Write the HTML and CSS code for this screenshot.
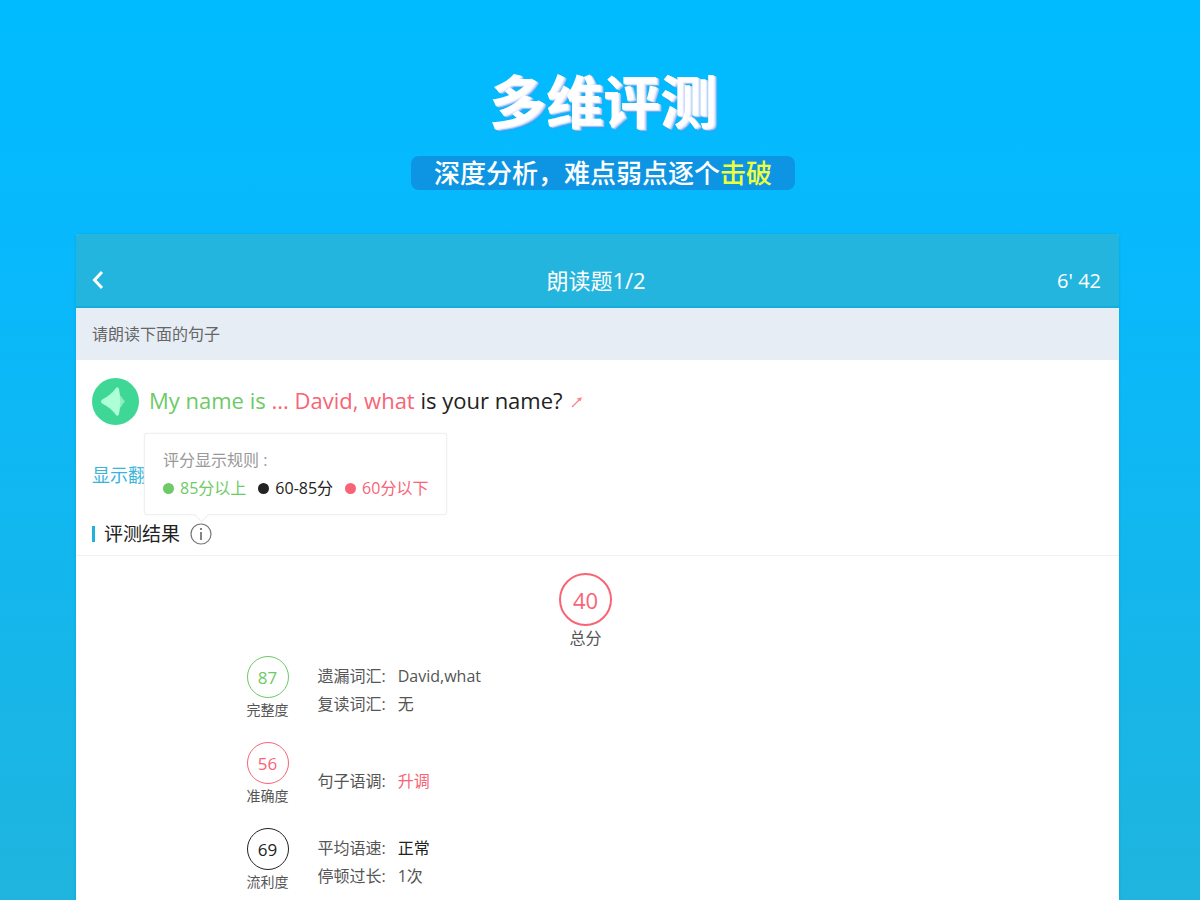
FILE: index.html
```
<!DOCTYPE html>
<html lang="zh-CN">
<head>
    <meta charset="UTF-8">
    <meta name="viewport" content="width=device-width, initial-scale=1.0">
    <title>多维评测</title>
    <link rel="stylesheet" href="styles.css">
</head>
<body>
    <header class="hero">
        <h1>多维评测</h1>
        <p class="slogan">深度分析，难点弱点逐个<strong>击破</strong></p>
    </header>

    <main class="panel">
        <div class="topbar">
            <button class="back" aria-label="返回">
                <svg width="14" height="20" viewBox="0 0 14 20"><path d="M11 2 L3.500 10 L11 18" fill="none" stroke="#fff" stroke-width="3"/></svg>
            </button>
            <h2>朗读题1/2</h2>
            <span class="timer">6' 42</span>
        </div>
        <p class="notice">请朗读下面的句子</p>

        <section class="question">
            <button class="play" aria-label="播放">
                <svg width="47" height="47" viewBox="0 0 47 47">
                    <circle cx="23.500" cy="23.500" r="23.500" fill="#3fd796"/>
                    <path d="M26 17 Q30 18 30 20 L33 23.500 L30 27 Q30 29 26 31 Z" fill="#8ceebc"/>
                    <path d="M9 23.500 Q9 22 11 21 Q19 17 24 10 Q26 8 27 11 Q29.500 23.500 27 36 Q26 39 24 37 Q19 30 11 26 Q9 25 9 23.500 Z" fill="#adffd5"/>
                </svg>
            </button>
            <p class="sentence"><span class="good">My name is</span> <span class="bad">... David, what</span> is your name?</p>
            <svg class="rise" width="11" height="12" viewBox="0 0 11 12"><path d="M1 11 L9 3 M6 3 L10 2 L9 5" fill="none" stroke="#f9808d" stroke-width="1.200"/></svg>
        </section>
        <a class="translate" href="#">显示翻译</a>

        <div class="result-title">
            <h3>评测结果</h3>
            <div class="info">
                <button aria-label="评分显示规则">
                    <svg width="22" height="22" viewBox="0 0 22 22"><circle cx="11" cy="11" r="10" fill="none" stroke="#777" stroke-width="1.200"/><path d="M11 9 V17 M11 5 V7" stroke="#666" stroke-width="1.600"/></svg>
                </button>
                <div class="tooltip">
                    <p>评分显示规则 :</p>
                    <ul>
                        <li class="good">85分以上</li>
                        <li>60-85分</li>
                        <li class="bad">60分以下</li>
                    </ul>
                </div>
            </div>
        </div>

        <section class="scores">
            <div class="score total bad">
                <span class="circle">40</span>
                <span class="label">总分</span>
            </div>
            <div class="row">
                <div class="score good">
                    <span class="circle">87</span>
                    <span class="label">完整度</span>
                </div>
                <dl>
                    <div><dt>遗漏词汇:</dt><dd>David,what</dd></div>
                    <div><dt>复读词汇:</dt><dd>无</dd></div>
                </dl>
            </div>
            <div class="row">
                <div class="score bad">
                    <span class="circle">56</span>
                    <span class="label">准确度</span>
                </div>
                <dl class="single">
                    <div><dt>句子语调:</dt><dd class="bad">升调</dd></div>
                </dl>
            </div>
            <div class="row">
                <div class="score">
                    <span class="circle">69</span>
                    <span class="label">流利度</span>
                </div>
                <dl>
                    <div><dt>平均语速:</dt><dd class="normal">正常</dd></div>
                    <div><dt>停顿过长:</dt><dd>1次</dd></div>
                </dl>
            </div>
        </section>
    </main>
</body>
</html>
```
FILE: styles.css
```
* {
    margin: 0;
    padding: 0;
    box-sizing: border-box;
}

body {
    min-height: 100vh;
    display: flex;
    flex-direction: column;
    background: linear-gradient(#00bbff, #08b9fc 28%, #20b4dc);
    font-family: "Open Sans", "Noto Sans CJK SC", sans-serif;
    font-size: 16px;
    color: #222;
}

button {
    border: none;
    background: none;
    cursor: pointer;
}

svg {
    display: block;
}

.good {
    color: #6dca65;
}

.bad {
    color: #f86475;
}

/* heading above the panel */
.hero {
    display: flex;
    flex-direction: column;
    align-items: center;
    gap: 20px;
    padding: 66px 0 44px 6px;
}

.hero h1 {
    font-size: 57px;
    line-height: 70px;
    font-weight: 700;
    color: #fff;
    text-shadow: 1px 1px 0 #eef2ff, 2px 1px 0 #cfdbf8, 3px 2px 1px #a9c8f5, 3px 3px 2px #2a9df0;
}

.slogan {
    padding: 0 23px;
    border-radius: 8px;
    background: #0d95e3;
    color: #fff;
    font-size: 26px;
    font-weight: 500;
    line-height: 34px;
}

.slogan strong {
    font-weight: 500;
    color: #f0ff3c;
}

/* app panel */
.panel {
    flex: 1;
    margin: 0 81px 0 76px;
    background: #fff;
    border-radius: 4px 4px 0 0;
    box-shadow: 0 0 3px #00a5df;
}

.topbar {
    display: grid;
    grid-template-columns: 1fr auto 1fr;
    align-items: center;
    padding: 20px 18px 0 15px;
    height: 74px;
    background: #23b5de;
    border-bottom: 2px solid #12add8;
    border-radius: 3px 3px 0 0;
    color: #fff;
}

.back {
    justify-self: start;
}

.topbar h2 {
    font-size: 22px;
    font-weight: 400;
    line-height: 26px;
}

.timer {
    justify-self: end;
    font-size: 20px;
}

.notice {
    padding: 0 16px;
    background: #e6edf5;
    color: #666;
    line-height: 52px;
}

.question {
    display: flex;
    align-items: center;
    padding: 18px 16px 0;
}

.sentence {
    margin: 0 8px 0 10px;
    padding-bottom: 4px;
    font-size: 22px;
    line-height: 30px;
}

.translate {
    display: block;
    margin: 36px 16px 0;
    color: #35b4dc;
    font-size: 18px;
    line-height: 28px;
    text-decoration: none;
}

.result-title {
    display: flex;
    align-items: center;
    gap: 10px;
    margin-top: 24px;
    padding: 0 16px;
    height: 43px;
    border-bottom: 1px solid #f0f0f0;
}

.result-title h3 {
    display: flex;
    align-items: center;
    gap: 9px;
    font-size: 19px;
    font-weight: 400;
    line-height: 24px;
}

.result-title h3::before {
    content: "";
    width: 3px;
    height: 16px;
    background: #1fb2dd;
}

.info {
    position: relative;
}

.info button {
    display: block;
}

.tooltip {
    position: absolute;
    left: -46px;
    bottom: 30px;
    padding: 12px 18px;
    background: #fff;
    border: 1px solid #f0f0f0;
    border-radius: 3px;
    box-shadow: 0 0 2px #eee;
    line-height: 28px;
    white-space: nowrap;
}

.tooltip::after {
    content: "";
    position: absolute;
    left: 51px;
    bottom: -6px;
    width: 10px;
    height: 10px;
    background: #fff;
    border: solid #eee;
    border-width: 0 1px 1px 0;
    transform: rotate(45deg);
}

.tooltip p {
    color: #999;
}

.tooltip ul {
    display: flex;
    gap: 12px;
    list-style: none;
}

.tooltip li {
    display: flex;
    align-items: center;
    gap: 6px;
}

.tooltip li::before {
    content: "";
    width: 11px;
    height: 11px;
    border-radius: 50%;
    background: currentColor;
}

/* scores */
.scores {
    width: 702px;
    max-width: 100%;
    margin: 0 auto;
    padding: 17px 24px 20px 0;
}

.score {
    display: flex;
    flex-direction: column;
    align-items: center;
    width: 42px;
}

.circle {
    display: flex;
    align-items: center;
    justify-content: center;
    width: 42px;
    height: 42px;
    border: 1px solid currentColor;
    border-radius: 50%;
    font-size: 17px;
}

.label {
    color: #555;
    font-size: 14px;
    line-height: 24px;
    white-space: nowrap;
}

.total {
    width: auto;
    margin-bottom: 6px;
}

.total .circle {
    width: 53px;
    height: 53px;
    border-width: 2px;
    font-size: 22px;
}

.total .label {
    font-size: 16px;
}

.row {
    display: flex;
    align-items: flex-start;
    gap: 29px;
    height: 86px;
}

dl {
    padding-top: 6px;
    color: #555;
    line-height: 28px;
}

dl.single {
    padding-top: 25px;
}

dl div {
    display: flex;
    gap: 12px;
}

.normal {
    color: #222;
}
```
